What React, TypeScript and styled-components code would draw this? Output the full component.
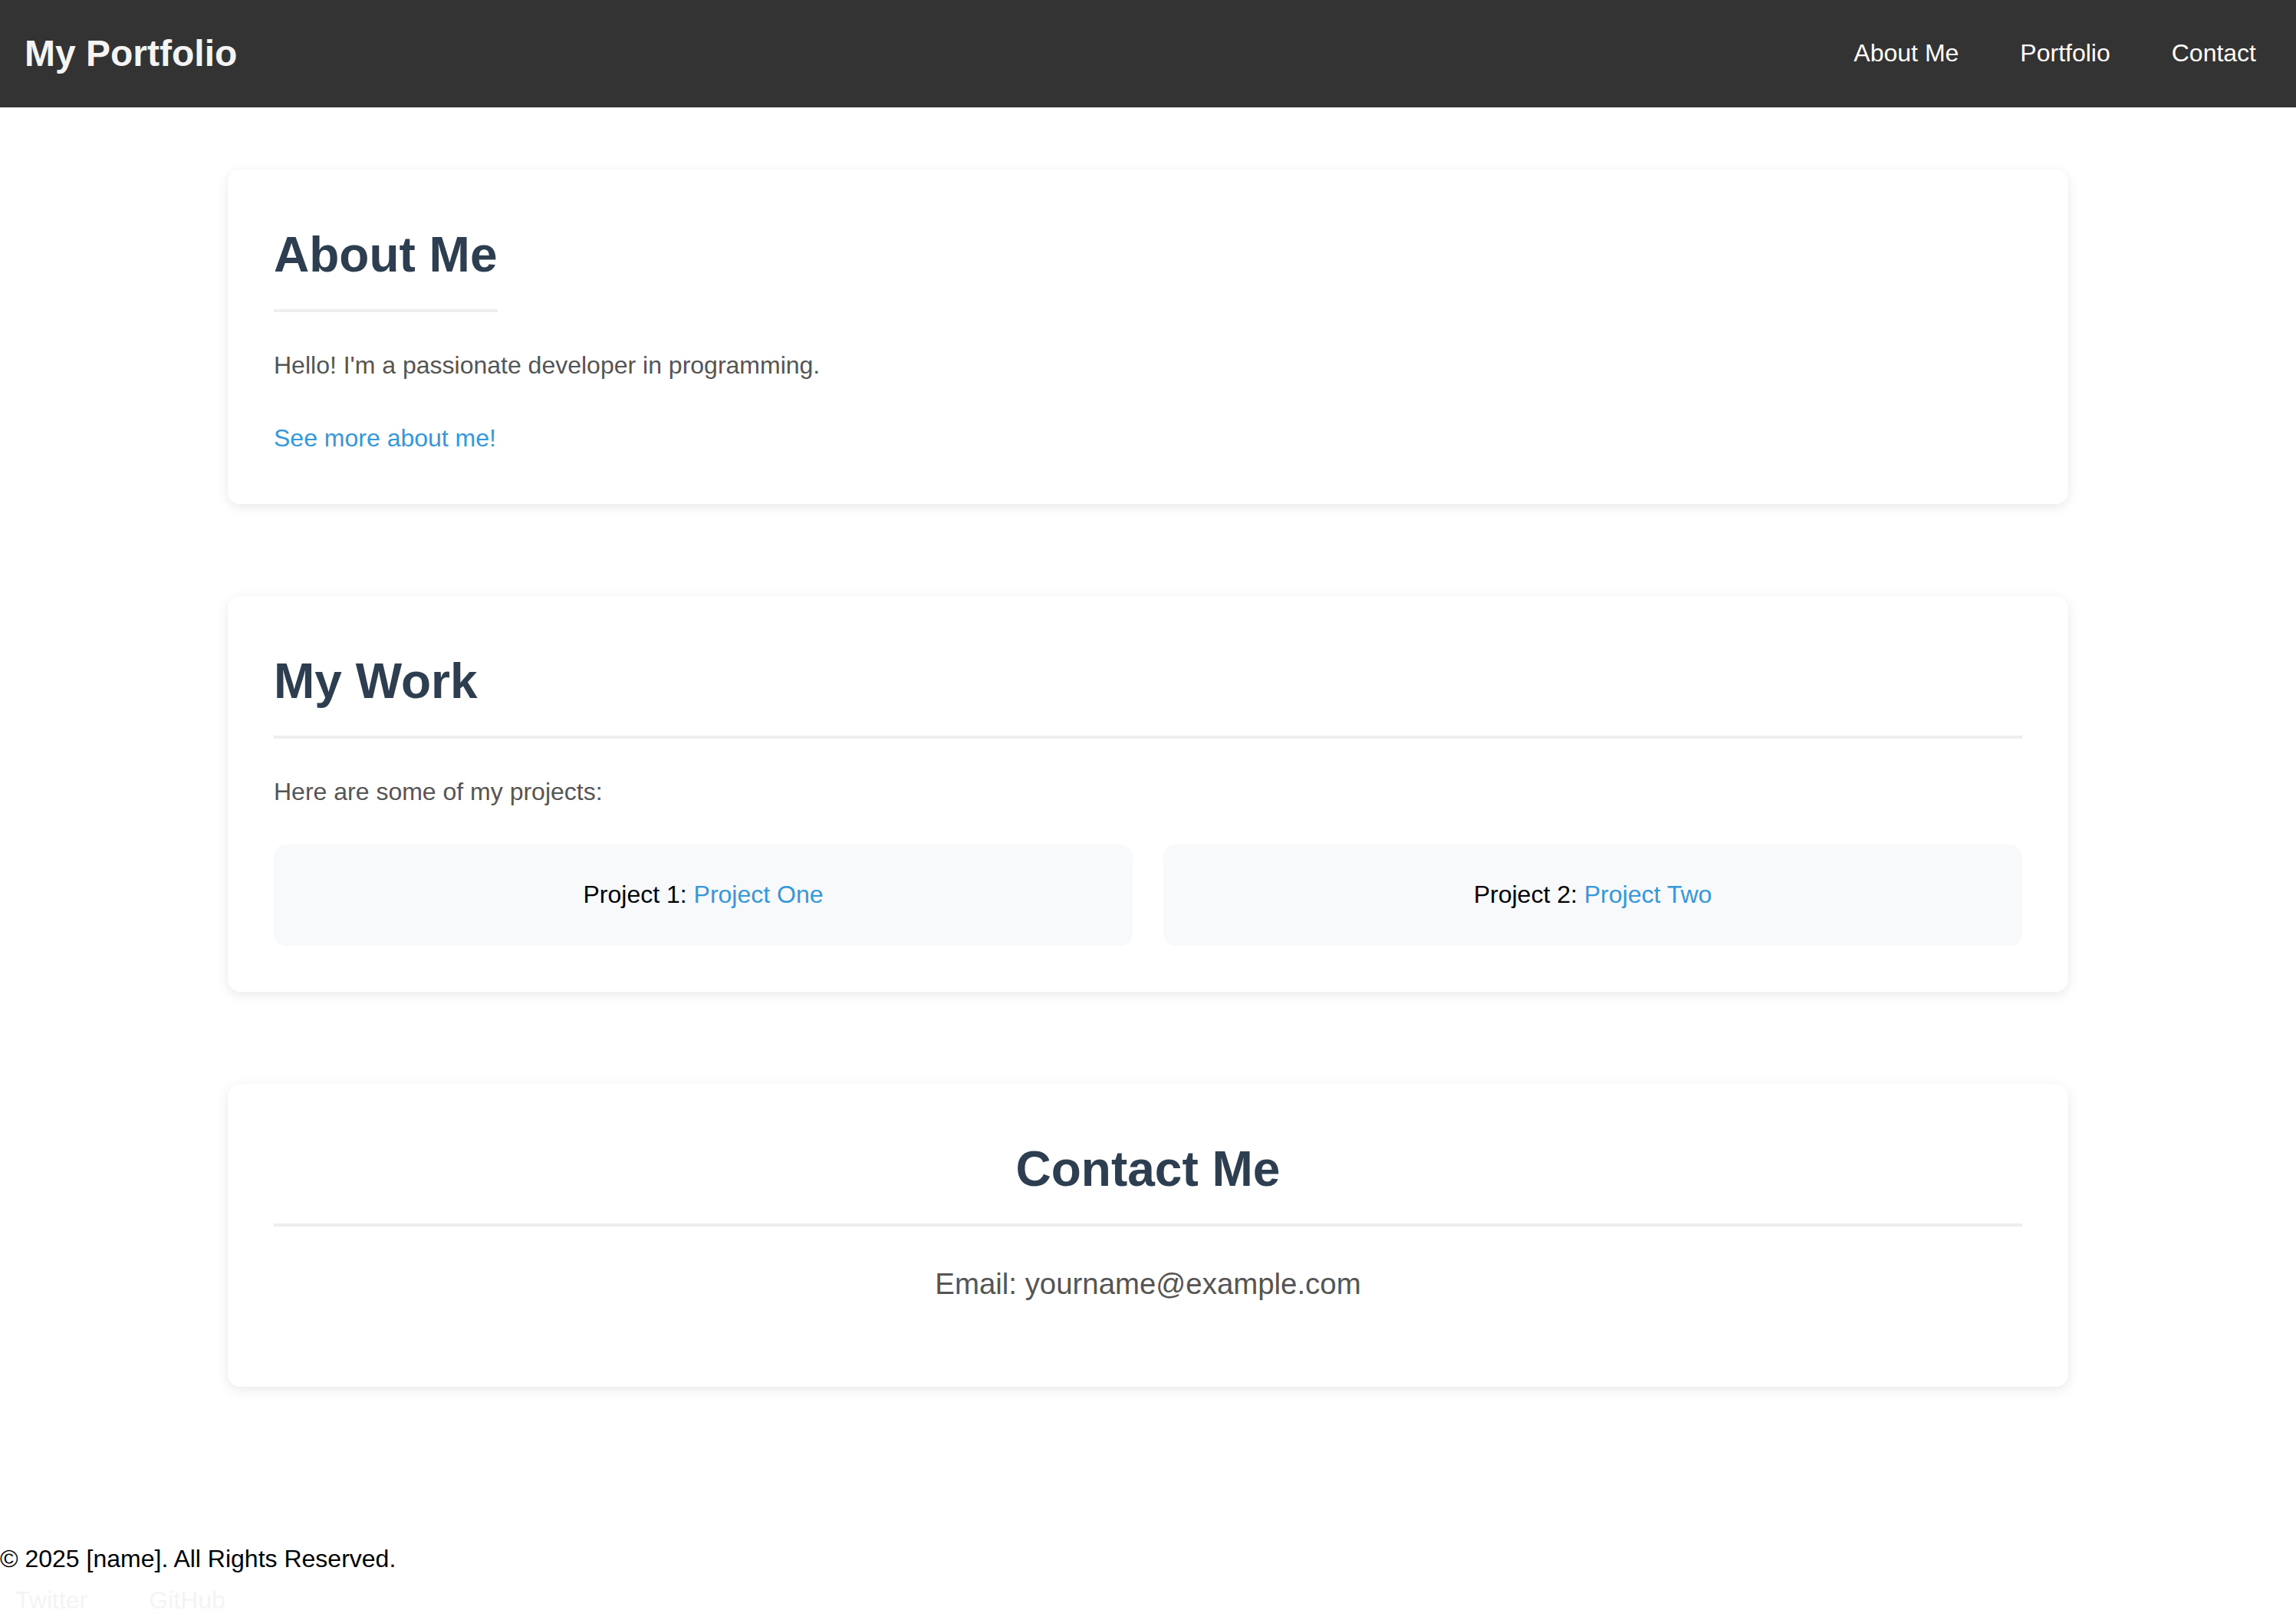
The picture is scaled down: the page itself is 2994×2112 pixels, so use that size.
import React from 'react';
import styled, { createGlobalStyle } from 'styled-components';

const GlobalStyle = createGlobalStyle`
  html, body {
    margin: 0;
    padding: 0;
    background: #fff;
  }

  body {
    font-family: "Liberation Sans", Arial, sans-serif;
    line-height: 1.6;
    color: #000;
  }

  a {
    text-decoration: none;
  }
`;

const Header = styled.header`
  display: flex;
  align-items: center;
  justify-content: space-between;
  height: 140px;
  padding: 0 32px;
  background: #333;
`;

const Brand = styled.h1`
  margin: 0;
  font-size: 48px;
  font-weight: 700;
  line-height: 1.2;
  color: #f4f4f4;
`;

const LinkList = styled.ul`
  display: flex;
  gap: 40px;
  margin: 0;
  padding: 0;
  list-style: none;
`;

const NavLink = styled.a<{ $muted?: boolean }>`
  display: block;
  padding: 0 20px;
  font-size: 32px;
  color: ${props => (props.$muted ? '#f4f4f4' : '#fff')};
`;

const Main = styled.main`
  display: flex;
  flex-direction: column;
  gap: 120px;
  padding: 81px 0 199px;
`;

const Card = styled.section<{ $center?: boolean }>`
  width: 2400px;
  margin: 0 auto;
  box-sizing: border-box;
  padding: 60px;
  background: #fff;
  border-radius: 16px;
  box-shadow: 0 4px 16px rgba(0, 0, 0, 0.09);
  text-align: ${props => (props.$center ? 'center' : 'left')};
`;

const Title = styled.h2<{ $fit?: boolean }>`
  width: ${props => (props.$fit ? 'fit-content' : 'auto')};
  margin: 0 0 44px;
  padding-bottom: 20px;
  border-bottom: 4px solid #eee;
  font-size: 64px;
  font-weight: 700;
  color: #2c3e50;
`;

const Text = styled.p<{ $large?: boolean }>`
  margin: 0 0 ${props => (props.$large ? '44px' : '43px')};
  font-size: ${props => (props.$large ? '38.4px' : '32px')};
  color: #555;
`;

const MoreLink = styled.a`
  display: block;
  width: fit-content;
  font-size: 32px;
  color: #3498db;
`;

const ProjectGrid = styled.div`
  display: grid;
  grid-template-columns: 1fr 1fr;
  gap: 40px;
`;

const ProjectCard = styled.div`
  padding: 40px;
  background: #f8f9fa;
  border-radius: 16px;
  font-size: 32px;
  text-align: center;
  color: #000;

  a {
    color: #3498db;
  }
`;

const Footer = styled.footer`
  font-size: 32px;
  color: #000;
`;

const Copyright = styled.p`
  margin: 0 0 2px;
`;

const projects = [
  { label: 'Project 1', name: 'Project One' },
  { label: 'Project 2', name: 'Project Two' },
];

const navItems = ['About Me', 'Portfolio', 'Contact'];
const socialItems = ['Twitter', 'GitHub'];

const App: React.FC = () => {
  return (
    <>
      <GlobalStyle />
      <Header>
        <Brand>My Portfolio</Brand>
        <nav>
          <LinkList>
            {navItems.map(item => (
              <li key={item}>
                <NavLink href="#">{item}</NavLink>
              </li>
            ))}
          </LinkList>
        </nav>
      </Header>

      <Main>
        <Card id="about">
          <Title $fit>About Me</Title>
          <Text>Hello! I'm a passionate developer in programming.</Text>
          <MoreLink href="#">See more about me!</MoreLink>
        </Card>

        <Card id="portfolio">
          <Title>My Work</Title>
          <Text>Here are some of my projects:</Text>
          <ProjectGrid>
            {projects.map(project => (
              <ProjectCard key={project.label}>
                {project.label}: <a href="#">{project.name}</a>
              </ProjectCard>
            ))}
          </ProjectGrid>
        </Card>

        <Card id="contact" $center>
          <Title>Contact Me</Title>
          <Text $large>Email: yourname@example.com</Text>
        </Card>
      </Main>

      <Footer>
        <Copyright>© 2025 [name]. All Rights Reserved.</Copyright>
        <LinkList>
          {socialItems.map(item => (
            <li key={item}>
              <NavLink href="#" $muted>
                {item}
              </NavLink>
            </li>
          ))}
        </LinkList>
      </Footer>
    </>
  );
};

export default App;
